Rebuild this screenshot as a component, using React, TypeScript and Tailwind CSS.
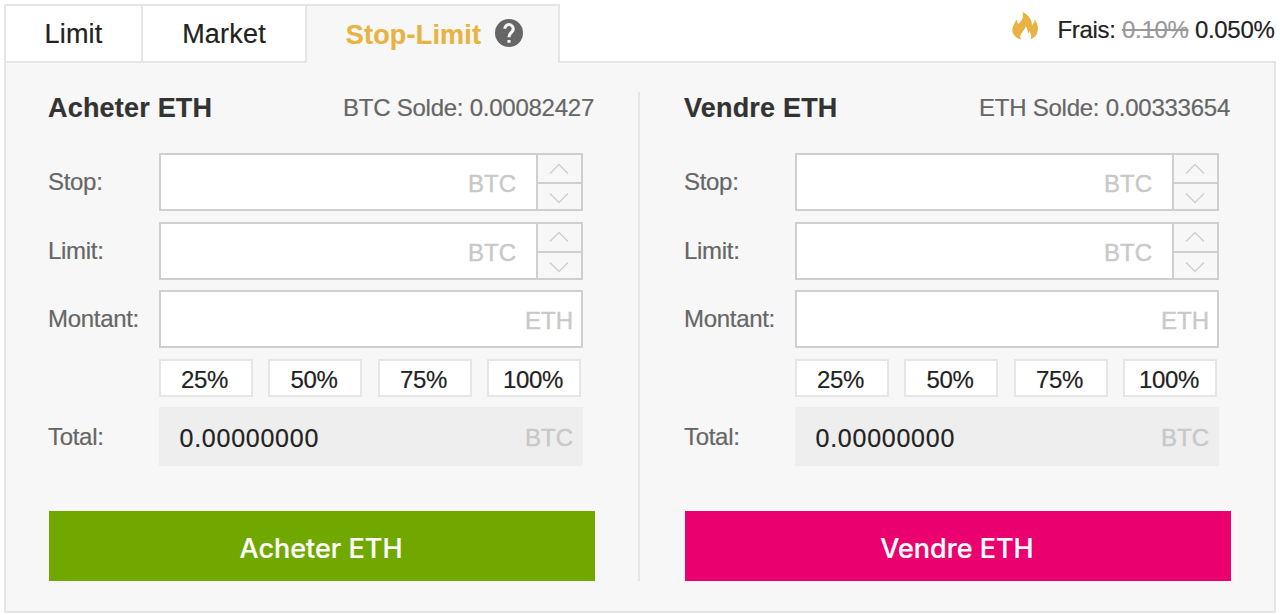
import { FC } from 'react'

interface OrderFormProps {
  title: string
  balance: string
  submitClass: string
}

const percents = ['25%', '50%', '75%', '100%']

const Stepper: FC = () => {
  return (
    <div className="flex w-[45px] flex-col border-l-2 border-[#cfcfcf] bg-[#f7f7f7] pr-[2px]">
      <button className="-mr-[2px] flex h-[29px] items-center justify-center border-b-2 border-[#cfcfcf] pr-[2px]">
        <svg width="20" height="12" viewBox="0 0 20 12" fill="none" stroke="#cfcfcf" strokeWidth="1.5">
          <path d="M1 10.500 10 1.500l9 9" />
        </svg>
      </button>
      <button className="flex flex-1 items-center justify-center pt-[3px]">
        <svg width="20" height="12" viewBox="0 0 20 12" fill="none" stroke="#cfcfcf" strokeWidth="1.5">
          <path d="M1 1.500l9 9 9-9" />
        </svg>
      </button>
    </div>
  )
}

const PriceRow: FC<{ label: string }> = ({ label }) => {
  return (
    <div className="mb-[10.5px] flex h-[58px]">
      <span className="w-[110.5px] text-[24px] leading-[58px] tracking-[-0.3px] text-[#666]">{label}</span>
      <div className="flex w-[424.5px] border-2 border-[#cfcfcf] bg-white">
        <span className="flex-1 pr-[20px] text-right text-[24px] leading-[57px] text-[#c8c8c8] [-webkit-text-stroke:0.4px_#c8c8c8]">BTC</span>
        <Stepper />
      </div>
    </div>
  )
}

const OrderForm: FC<OrderFormProps> = ({ title, balance, submitClass }) => {
  return (
    <section className="w-[547px] pt-[28px]">
      <div className="flex h-[34px] items-center justify-between pr-px">
        <h2 className="text-[27px] font-bold tracking-[0.2px] text-[#333]">{title}</h2>
        <span className="text-[24px] tracking-[-0.25px] text-[#666]">{balance}</span>
      </div>

      <div className="mt-[28px]">
        <PriceRow label="Stop:" />
        <PriceRow label="Limit:" />

        <div className="flex h-[58px]">
          <span className="w-[110.5px] text-[24px] leading-[58px] tracking-[-0.3px] text-[#666]">Montant:</span>
          <div className="w-[424.5px] border-2 border-[#cfcfcf] bg-white pr-[8px] text-right text-[24px] leading-[57px] text-[#c8c8c8] [-webkit-text-stroke:0.4px_#c8c8c8]">
            ETH
          </div>
        </div>

        {/* Quick amounts */}
        <div className="ml-[110.5px] mt-[11px] flex w-[422.5px] justify-between">
          {percents.map((p) => (
            <button key={p} className="h-[38px] w-[94px] border-2 border-[#e6e6e6] bg-white pr-[2px] text-[24px] leading-[37px] tracking-[-0.3px] text-[#222]">
              {p}
            </button>
          ))}
        </div>

        <div className="mt-[10px] flex h-[58.5px]">
          <span className="w-[110.5px] text-[24px] leading-[59px] tracking-[-0.3px] text-[#666]">Total:</span>
          <div className="flex w-[424.5px] justify-between bg-[#eee] pl-[21px] pr-[10px] text-[24px] leading-[62px]">
            <span className="text-[25px] tracking-[0.75px] text-[#222]">0.00000000</span>
            <span className="text-[#c8c8c8] [-webkit-text-stroke:0.4px_#c8c8c8]">BTC</span>
          </div>
        </div>
      </div>

      <button className={submitClass}>{title}</button>
    </section>
  )
}

export default function App() {
  return (
    <div className="h-[615px] w-[1280px] overflow-hidden whitespace-nowrap bg-white pl-1 pt-1 font-['Liberation_Sans',Arial,sans-serif] [-webkit-text-stroke:0.2px]">
      <div className="flex h-[57px] w-[1272px] justify-between">
        {/* Order types */}
        <nav className="relative flex h-[59px] text-[27px] leading-[56px] text-[#222]">
          <button className="w-[139px] border-2 border-[#e5e5e5] bg-white tracking-[0.2px]">Limit</button>
          <button className="w-[164px] border-y-2 border-r-2 border-[#e5e5e5] bg-white tracking-[0.2px]">Market</button>
          <button className="flex w-[253px] items-center justify-center border-r-2 border-t-2 border-[#e5e5e5] bg-[#f7f7f7] pl-[4px] font-bold tracking-[0.2px] text-[#e8b342]">
            Stop-Limit
            <svg className="mb-[3px] ml-[14px]" width="28" height="28" viewBox="2 2 20 20">
              <circle cx="12" cy="12" r="10" fill="#666" />
              <path d="M9 9a3 3 0 1 1 5.120 2.120l-.9.920Q12 13.200 12 15M12 17v2" fill="none" stroke="#f7f7f7" strokeWidth="2.200" />
            </svg>
          </button>
        </nav>

        {/* Fees */}
        <div className="flex pr-[1.5px] text-[24px] leading-[51px] tracking-[-0.3px] text-[#222]">
          <svg className="mr-[19px] mt-[8px]" width="26" height="28" viewBox="0 0 26 28" fill="#e8b342">
            <path d="M10.500 0C16 2.500 20 7 20 13c1.500-1 2.500-3 2.600-5.500 2.500 3 3.800 7 3.200 11C25.200 23 22.500 26 18.500 27.500c1.300-3 .8-6-1.300-8.500-.1 1.300-.5 2-1.200 2.500-.2-3-.8-5.500-2.200-7.200-.5 3-3 4.700-4.800 7.700-1.200 2-.8 4 .2 5.500C4.500 26.500.5 23 .3 18.500c-.1-4 2.300-7 4.200-11 .9 1.800 1.300 3 1.500 4.700C9.500 9.500 12 5.500 10.500 0z" />
          </svg>
          <span>
            Frais: <span className="text-[#999] line-through">0.10%</span> 0.050%
          </span>
        </div>
      </div>

      <main className="flex h-[552px] w-[1272px] border-2 border-[#e5e5e5] bg-[#f7f7f7] pl-[42px]">
        <OrderForm
          title="Acheter ETH"
          balance="BTC Solde: 0.00082427"
          submitClass="ml-px mt-[45.5px] block h-[70px] w-[546px] bg-[#70a800] pr-[2px] pt-[6px] font-['Inter',sans-serif] text-[27px] font-medium text-white"
        />
        <div className="ml-[43px] mr-[44px] mt-[29px] h-[489px] w-[2px] bg-[#e5e5e5]" />
        <OrderForm
          title="Vendre ETH"
          balance="ETH Solde: 0.00333654"
          submitClass="ml-px mt-[45.5px] block h-[70px] w-[546px] bg-[#ea006f] pr-[2px] pt-[6px] font-['Inter',sans-serif] text-[27px] font-medium text-white"
        />
      </main>
    </div>
  )
}
